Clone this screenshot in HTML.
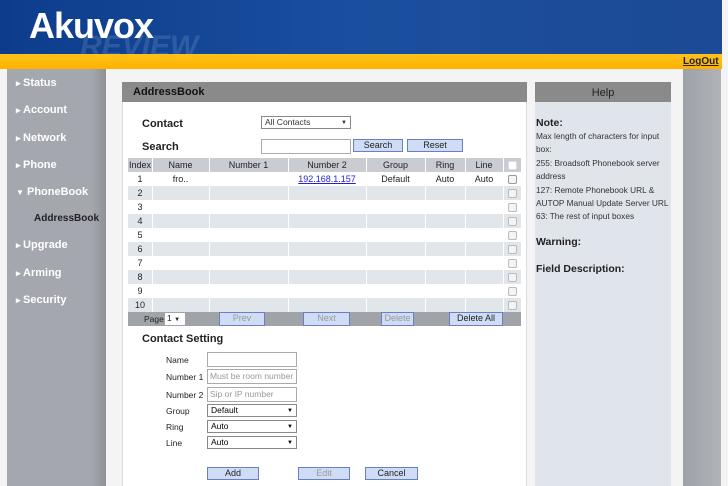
<!DOCTYPE html>
<html><head><style>
*{margin:0;padding:0;box-sizing:border-box}
body{width:728px;height:486px;overflow:hidden;background:#f4f4f4;font-family:"Liberation Sans",sans-serif;position:relative;font-size:9px;color:#222}
.a{position:absolute}
.hdr{left:0;top:0;width:722px;height:55px;background:linear-gradient(90deg,#0d3c8c,#1a4f9f 50%,#1d4a94);}
.yel{left:0;top:54px;width:722px;height:15px;background:linear-gradient(#ffc21a,#ffb100)}
.side{left:7px;top:69px;width:99px;height:417px;background:linear-gradient(90deg,#a4a8ae 85%,#8e9297)}
.rs{left:683px;top:69px;width:38px;height:417px;background:linear-gradient(90deg,#9ea2a8,#b0b3b8)}
.nav{color:#fff;font-weight:bold;font-size:11px;left:16px}
.nav:before{content:"▸ ";font-size:9px}
.bar{background:#8a8a8a;height:20px}
.th{background:#c9cdd1;height:14px}
.cell{position:absolute;text-align:center;top:2px;font-size:9px}
.btn{position:absolute;background:#cfdcf5;border:1px solid #6c7fc4;height:12px;font-size:9px;text-align:center;line-height:10px}
.inp{position:absolute;background:#fff;border:1px solid #aaa;height:15px;width:90px;font-size:8.5px;color:#999;padding-left:2px;line-height:13px}
.sel{position:absolute;background:#fff;border:1px solid #888;height:13px;width:90px;font-size:8.5px;padding-left:3px;line-height:11px;color:#000}
.sel:after{content:"▼";position:absolute;right:3px;font-size:6px;top:1px}
.lbl{position:absolute;font-size:8.5px;left:166px}
.cb{position:absolute;left:508px;width:9px;height:9px;border:1px solid #bbb;border-radius:2px;background:#f4f4f4}
</style></head><body>
<div class="a hdr"></div>
<div class="a" style="left:29px;top:5px;font-size:36px;font-weight:bold;color:#fff;letter-spacing:-1px">Akuvox</div>
<div class="a" style="left:80px;top:30px;font-size:30px;font-weight:bold;font-style:italic;color:rgba(255,255,255,.12)">REVIEW</div>
<div class="a yel"></div>
<div class="a" style="left:683px;top:56px;font-size:10px;font-weight:bold;text-decoration:underline;color:#222">LogOut</div>
<div class="a side"></div>
<div class="a rs"></div>
<div class="a nav" style="top:77px">Status</div>
<div class="a nav" style="top:104px">Account</div>
<div class="a nav" style="top:132px">Network</div>
<div class="a nav" style="top:159px">Phone</div>
<div class="a" style="left:16px;top:186px;color:#fff;font-weight:bold;font-size:11px"><span style="font-size:8px">▼</span> PhoneBook</div>
<div class="a" style="left:34px;top:213px;color:#222;font-weight:bold;font-size:10px">AddressBook</div>
<div class="a nav" style="top:239px">Upgrade</div>
<div class="a nav" style="top:267px">Arming</div>
<div class="a nav" style="top:294px">Security</div>

<div class="a" style="left:122px;top:82px;width:405px;height:404px;background:#fff;border-left:1px solid #ddd;border-right:1px solid #ddd"></div>
<div class="a bar" style="left:122px;top:82px;width:405px"></div>
<div class="a" style="left:133px;top:86px;font-size:11px;font-weight:bold;color:#111">AddressBook</div>
<div class="a" style="left:142px;top:118px;font-size:11px;font-weight:bold">Contact</div>
<div class="sel" style="left:261px;top:116px;width:90px;color:#333">All Contacts</div>
<div class="a" style="left:142px;top:141px;font-size:11px;font-weight:bold">Search</div>
<div class="inp" style="left:261px;top:139px;width:90px"></div>
<div class="btn" style="left:353px;top:139px;width:50px;height:13px">Search</div>
<div class="btn" style="left:407px;top:139px;width:56px;height:13px">Reset</div>

<div class="a th" style="left:128px;top:158px;width:393px"></div>
<div class="a" style="left:128px;top:172px;width:393px;height:140px;background:repeating-linear-gradient(#fff 0 14px,#e1e6ea 14px 28px)"></div>
<svg class="a" style="left:128px;top:158px" width="393" height="154"><g stroke="#fff" stroke-width="1">
<line x1="24.5" y1="0" x2="24.5" y2="154"/><line x1="81.5" y1="0" x2="81.5" y2="154"/><line x1="160.5" y1="0" x2="160.5" y2="154"/><line x1="238.5" y1="0" x2="238.5" y2="154"/><line x1="297.5" y1="0" x2="297.5" y2="154"/><line x1="337.5" y1="0" x2="337.5" y2="154"/><line x1="375.5" y1="0" x2="375.5" y2="154"/></g></svg>
<div class="a" style="left:128px;top:158px;width:393px;height:14px">
<div class="cell" style="left:0;width:24px">Index</div><div class="cell" style="left:24px;width:57px">Name</div><div class="cell" style="left:81px;width:79px">Number 1</div><div class="cell" style="left:160px;width:78px">Number 2</div><div class="cell" style="left:238px;width:59px">Group</div><div class="cell" style="left:297px;width:40px">Ring</div><div class="cell" style="left:337px;width:38px">Line</div></div>
<div class="cb" style="top:161px;background:#fff;border-color:#ddd"></div>
<div class="a" style="left:128px;top:172px;width:393px;height:14px">
<div class="cell" style="left:0;width:24px">1</div><div class="cell" style="left:24px;width:57px">fro..</div><div class="cell" style="left:160px;width:78px;color:#2222dd;text-decoration:underline">192.168.1.157</div><div class="cell" style="left:238px;width:59px">Default</div><div class="cell" style="left:297px;width:40px">Auto</div><div class="cell" style="left:337px;width:38px">Auto</div></div>
<div class="cb" style="top:175px;border-color:#999"></div>
<div class="a" style="left:128px;top:186px;width:24px;font-size:9px;text-align:center;line-height:14px">2<br>3<br>4<br>5<br>6<br>7<br>8<br>9<br>10</div>
<div class="cb" style="top:189px"></div><div class="cb" style="top:203px"></div><div class="cb" style="top:217px"></div><div class="cb" style="top:231px"></div><div class="cb" style="top:245px"></div><div class="cb" style="top:259px"></div><div class="cb" style="top:273px"></div><div class="cb" style="top:287px"></div><div class="cb" style="top:301px"></div>

<div class="a" style="left:128px;top:312px;width:393px;height:14px;background:#a0a3a8"></div>
<div class="a" style="left:144px;top:314px;font-size:8.5px">Page</div>
<div class="a" style="left:165px;top:313px;width:20px;height:12px;background:#fff;font-size:8.5px;padding-left:2px">1 <span style="font-size:6px">▼</span></div>
<div class="btn" style="left:219px;top:312px;width:46px;height:14px;color:#999">Prev</div>
<div class="btn" style="left:303px;top:312px;width:47px;height:14px;color:#999">Next</div>
<div class="btn" style="left:381px;top:312px;width:33px;height:14px;color:#999">Delete</div>
<div class="btn" style="left:449px;top:312px;width:54px;height:14px">Delete All</div>

<div class="a" style="left:142px;top:333px;font-size:11px;font-weight:bold">Contact Setting</div>
<div class="lbl" style="top:355px">Name</div><div class="inp" style="left:207px;top:352px"></div>
<div class="lbl" style="top:372px">Number 1</div><div class="inp" style="left:207px;top:369px">Must be room number</div>
<div class="lbl" style="top:390px">Number 2</div><div class="inp" style="left:207px;top:387px">Sip or IP number</div>
<div class="lbl" style="top:406px">Group</div><div class="sel" style="left:207px;top:404px">Default</div>
<div class="lbl" style="top:422px">Ring</div><div class="sel" style="left:207px;top:420px">Auto</div>
<div class="lbl" style="top:438px">Line</div><div class="sel" style="left:207px;top:436px">Auto</div>
<div class="btn" style="left:207px;top:467px;width:52px;height:13px">Add</div>
<div class="btn" style="left:298px;top:467px;width:52px;height:13px;color:#999">Edit</div>
<div class="btn" style="left:365px;top:467px;width:53px;height:13px">Cancel</div>

<div class="a" style="left:535px;top:82px;width:136px;height:404px;background:#dfe5ea"></div>
<div class="a bar" style="left:535px;top:82px;width:136px;text-align:center;font-size:11px;line-height:22px;color:#222">Help</div>
<div class="a" style="left:536px;top:117px;font-size:10.5px;font-weight:bold">Note:</div>
<div class="a" style="left:536px;top:130px;width:135px;font-size:8.3px;line-height:13.4px;color:#333">Max length of characters for input box:<br>255: Broadsoft Phonebook server address<br>127: Remote Phonebook URL &amp; AUTOP Manual Update Server URL<br>63: The rest of input boxes</div>
<div class="a" style="left:536px;top:236px;font-size:10.5px;font-weight:bold">Warning:</div>
<div class="a" style="left:536px;top:263px;font-size:10.5px;font-weight:bold">Field Description:</div>
</body></html>
